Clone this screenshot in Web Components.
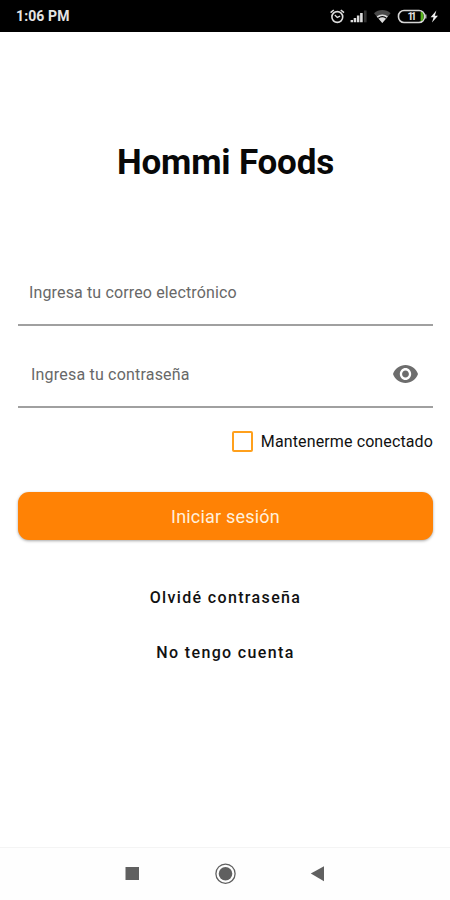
<!DOCTYPE html>
<html lang="es">
<head>
<meta charset="utf-8">
<title>Hommi Foods</title>
<style>
  body {
    margin: 0;
    background: #fff;
    font-family: Roboto, "Liberation Sans", sans-serif;
  }
</style>
</head>
<body>
<login-screen></login-screen>

<script>
  class StatusBar extends HTMLElement {
    connectedCallback() {
      this.attachShadow({mode: 'open'});
      this.shadowRoot.innerHTML = `
        <style>
          :host {
            display: flex;
            justify-content: space-between;
            align-items: center;
            height: 32px;
            box-sizing: border-box;
            padding: 0 10px 0 16px;
            background: #000;
            color: #e4e4e4;
          }
          .time { font-size: 14px; font-weight: 700; line-height: 33px; letter-spacing: 0.1px; }
          svg { display: block; }
        </style>
        <span class="time"><slot></slot></span>
        <svg width="112" height="20" viewBox="328 6 112 20" fill="none">
          <!-- alarm -->
          <g stroke="#dcdcdc" stroke-width="1.6">
            <circle cx="337.3" cy="17" r="5.4"/>
            <path d="M330.6 12.6l3.2-2.6M344 12.6l-3.2-2.6"/>
            <path d="M334.8 15l2.5 2.4 2.8-1.2" stroke-width="1.3"/>
          </g>
          <!-- signal -->
          <g fill="#dcdcdc">
            <path d="M350.6 20h2.4v2.3h-2.4zM353.7 18h2.5v4.3h-2.5zM356.9 15.5h2.5v6.8h-2.5zM360.1 13h2.6v9.3h-2.6z"/>
            <path d="M364 10.5h2.6v11.800h-2.600z" fill="#333"/>
          </g>
          <!-- wifi -->
          <path d="M382.3 23l-8.3-9.8c4.6-4.2 12-4.2 16.6 0z" fill="#4a4a4a"/>
          <path d="M382.3 23l-5.600-6.600c3.200-2.700 8-2.700 11.200 0z" fill="#dcdcdc"/>
          <path d="M378.2 18.300c2.400-1.900 5.800-1.900 8.200 0" stroke="#000" stroke-width="1.1"/>
          <!-- battery -->
          <rect x="398.500" y="10.500" width="26" height="12" rx="5.500" stroke="#d6d6d6" stroke-width="1.600"/>
          <path d="M420.600 12h1.400q1.600 1 1.600 4.500t-1.600 4.500h-1.400z" fill="#58b51c"/>
          <path d="M425.800 14.500v4" stroke="#d6d6d6" stroke-width="1.200"/>
          <text x="407.500" y="20" font-size="10" font-weight="700" fill="#e4e4e4" textLength="9">11</text>
          <!-- charging -->
          <path d="M436.400 10.500l-5.800 6.700h3l-1.600 5.300 6-6.800h-3.200z" fill="#f0f0f0"/>
        </svg>
      `;
    }
  }
  customElements.define('status-bar', StatusBar);

  class TextField extends HTMLElement {
    connectedCallback() {
      this.attachShadow({mode: 'open'});
      this.shadowRoot.innerHTML = `
        <style>
          :host {
            display: flex;
            justify-content: space-between;
            align-items: center;
            height: 66px;
            box-sizing: border-box;
            padding: 0 15px 0 var(--inset, 11px);
            border-bottom: 2px solid #a0a0a0;
            color: #686868;
            font-size: 16px;
          }
          .hint { letter-spacing: var(--track, 0.14px); }
        </style>
        <span class="hint"><slot></slot></span>
        <slot name="icon"></slot>
      `;
    }
  }
  customElements.define('text-field', TextField);

  class EyeIcon extends HTMLElement {
    connectedCallback() {
      this.attachShadow({mode: 'open'});
      this.shadowRoot.innerHTML = `
        <style>
          :host { display: block; }
          svg { display: block; }
        </style>
        <svg width="25" height="18" viewBox="1 4.5 22 15" preserveAspectRatio="none" fill="#6d6d6d">
          <path d="M12 4.500C7 4.500 2.730 7.610 1 12c1.730 4.390 6 7.500 11 7.500s9.270-3.110 11-7.500c-1.730-4.390-6-7.500-11-7.500zM12 17c-2.760 0-5-2.240-5-5s2.240-5 5-5 5 2.240 5 5-2.240 5-5 5zm0-8c-1.660 0-3 1.340-3 3s1.340 3 3 3 3-1.340 3-3-1.340-3-3-3z"/>
        </svg>
      `;
    }
  }
  customElements.define('eye-icon', EyeIcon);

  class CheckOption extends HTMLElement {
    connectedCallback() {
      this.attachShadow({mode: 'open'});
      this.shadowRoot.innerHTML = `
        <style>
          :host {
            display: flex;
            justify-content: flex-end;
            align-items: center;
            gap: 8px;
            color: #111;
            font-size: 16px;
            line-height: 20px;
          }
          .box {
            width: 21px;
            height: 21px;
            box-sizing: border-box;
            border: 2px solid #ffa01c;
            border-radius: 2px;
          }
          .label { letter-spacing: 0.12px; }
        </style>
        <span class="box"></span>
        <span class="label"><slot></slot></span>
      `;
    }
  }
  customElements.define('check-option', CheckOption);

  class PrimaryButton extends HTMLElement {
    connectedCallback() {
      this.attachShadow({mode: 'open'});
      this.shadowRoot.innerHTML = `
        <style>
          :host { display: block; }
          button {
            display: block;
            width: 100%;
            height: 48px;
            padding: 0;
            border: 0;
            border-radius: 11px;
            background: #ff8205;
            box-shadow: 0 1px 3px rgba(0, 0, 0, 0.35);
            color: #fff0dc;
            font: 400 18px/50px Roboto, "Liberation Sans", sans-serif;
            letter-spacing: 0.2px;
          }
        </style>
        <button><slot></slot></button>
      `;
    }
  }
  customElements.define('primary-button', PrimaryButton);

  class TextLink extends HTMLElement {
    connectedCallback() {
      this.attachShadow({mode: 'open'});
      this.shadowRoot.innerHTML = `
        <style>
          :host {
            display: block;
            text-align: center;
            color: #111;
            font-size: 16px;
            font-weight: 500;
            line-height: 20px;
            letter-spacing: 1.35px;
          }
        </style>
        <slot></slot>
      `;
    }
  }
  customElements.define('text-link', TextLink);

  class NavBar extends HTMLElement {
    connectedCallback() {
      this.attachShadow({mode: 'open'});
      this.shadowRoot.innerHTML = `
        <style>
          :host {
            display: flex;
            justify-content: center;
            height: 53px;
            box-sizing: border-box;
            border-top: 1px solid #f4f4f4;
            background: #fefefe;
          }
          svg { display: block; }
        </style>
        <svg width="450" height="52" viewBox="0 848 450 52" fill="#606060">
          <rect x="125.500" y="867" width="13.500" height="13"/>
          <circle cx="225.500" cy="873.700" r="6.800"/>
          <circle cx="225.500" cy="873.700" r="9.600" fill="none" stroke="#606060" stroke-width="1.300"/>
          <path d="M310.800 873.600L324 866.200v15z"/>
        </svg>
      `;
    }
  }
  customElements.define('nav-bar', NavBar);

  class LoginScreen extends HTMLElement {
    connectedCallback() {
      this.attachShadow({mode: 'open'});
      this.shadowRoot.innerHTML = `
        <style>
          :host {
            display: flex;
            flex-direction: column;
            height: 900px;
          }
          main {
            flex: 1;
            display: flex;
            flex-direction: column;
            padding: 111px 17px 0 18px;
          }
          h1 {
            margin: 0 0 77px;
            text-align: center;
            color: #080808;
            font-size: 35px;
            font-weight: 700;
            line-height: 40px;
            letter-spacing: -0.2px;
          }
          text-field + text-field {
            margin-top: 16px;
            --inset: 13px;
            --track: 0.2px;
          }
          check-option { margin-top: 23px; }
          primary-button { margin-top: 40px; }
          .links {
            display: flex;
            flex-direction: column;
            gap: 35px;
            margin-top: 48px;
          }
        </style>
        <status-bar>1:06 PM</status-bar>
        <main>
          <h1>Hommi Foods</h1>
          <text-field>Ingresa tu correo electrónico</text-field>
          <text-field>Ingresa tu contraseña<eye-icon slot="icon"></eye-icon></text-field>
          <check-option>Mantenerme conectado</check-option>
          <primary-button>Iniciar sesión</primary-button>
          <div class="links">
            <text-link>Olvidé contraseña</text-link>
            <text-link>No tengo cuenta</text-link>
          </div>
        </main>
        <nav-bar></nav-bar>
      `;
    }
  }
  customElements.define('login-screen', LoginScreen);
</script>
</body>
</html>
